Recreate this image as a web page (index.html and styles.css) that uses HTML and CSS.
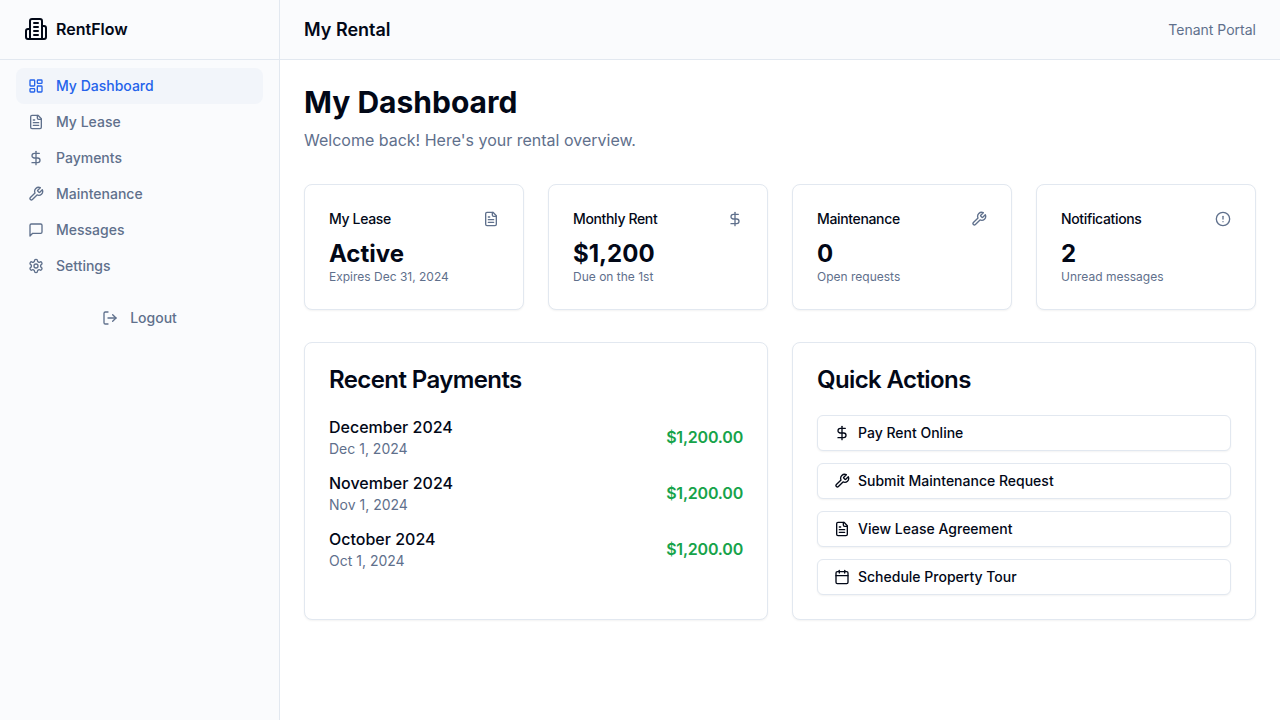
FILE: index.html
```html
<!doctype html>
<html lang="en">
<head>
	<meta charset="UTF-8">
	<title>RentFlow - My Dashboard</title>
	<link rel="stylesheet" href="styles.css">
</head>
<body>
	<svg class="sprite" xmlns="http://www.w3.org/2000/svg">
		<symbol id="i-building" viewBox="0 0 24 24"><path d="M6 22V4a2 2 0 0 1 2-2h8a2 2 0 0 1 2 2v18Z"/><path d="M6 12H4a2 2 0 0 0-2 2v6a2 2 0 0 0 2 2h2"/><path d="M18 9h2a2 2 0 0 1 2 2v9a2 2 0 0 1-2 2h-2"/><path d="M10 6h4"/><path d="M10 10h4"/><path d="M10 14h4"/><path d="M10 18h4"/></symbol>
		<symbol id="i-dashboard" viewBox="0 0 24 24"><rect width="7" height="9" x="3" y="3" rx="1"/><rect width="7" height="5" x="14" y="3" rx="1"/><rect width="7" height="9" x="14" y="12" rx="1"/><rect width="7" height="5" x="3" y="16" rx="1"/></symbol>
		<symbol id="i-file" viewBox="0 0 24 24"><path d="M15 2H6a2 2 0 0 0-2 2v16a2 2 0 0 0 2 2h12a2 2 0 0 0 2-2V7Z"/><path d="M14 2v4a2 2 0 0 0 2 2h4"/><path d="M10 9H8"/><path d="M16 13H8"/><path d="M16 17H8"/></symbol>
		<symbol id="i-dollar" viewBox="0 0 24 24"><line x1="12" x2="12" y1="2" y2="22"/><path d="M17 5H9.5a3.5 3.5 0 0 0 0 7h5a3.5 3.5 0 0 1 0 7H6"/></symbol>
		<symbol id="i-wrench" viewBox="0 0 24 24"><path d="M14.7 6.3a1 1 0 0 0 0 1.4l1.6 1.6a1 1 0 0 0 1.4 0l3.77-3.77a6 6 0 0 1-7.94 7.94l-6.91 6.91a2.12 2.12 0 0 1-3-3l6.91-6.91a6 6 0 0 1 7.94-7.94l-3.76 3.76z"/></symbol>
		<symbol id="i-message" viewBox="0 0 24 24"><path d="M21 15a2 2 0 0 1-2 2H7l-4 4V5a2 2 0 0 1 2-2h14a2 2 0 0 1 2 2z"/></symbol>
		<symbol id="i-settings" viewBox="0 0 24 24"><path d="M12.22 2h-.44a2 2 0 0 0-2 2v.18a2 2 0 0 1-1 1.73l-.43.25a2 2 0 0 1-2 0l-.15-.08a2 2 0 0 0-2.73.73l-.22.38a2 2 0 0 0 .73 2.73l.15.1a2 2 0 0 1 1 1.72v.51a2 2 0 0 1-1 1.74l-.15.09a2 2 0 0 0-.73 2.73l.22.38a2 2 0 0 0 2.73.73l.15-.08a2 2 0 0 1 2 0l.43.25a2 2 0 0 1 1 1.73V20a2 2 0 0 0 2 2h.44a2 2 0 0 0 2-2v-.18a2 2 0 0 1 1-1.73l.43-.25a2 2 0 0 1 2 0l.15.08a2 2 0 0 0 2.73-.73l.22-.39a2 2 0 0 0-.73-2.73l-.15-.08a2 2 0 0 1-1-1.74v-.5a2 2 0 0 1 1-1.74l.15-.09a2 2 0 0 0 .73-2.73l-.22-.38a2 2 0 0 0-2.73-.73l-.15.08a2 2 0 0 1-2 0l-.43-.25a2 2 0 0 1-1-1.73V4a2 2 0 0 0-2-2z"/><circle cx="12" cy="12" r="3"/></symbol>
		<symbol id="i-logout" viewBox="0 0 24 24"><path d="M9 21H5a2 2 0 0 1-2-2V5a2 2 0 0 1 2-2h4"/><polyline points="16 17 21 12 16 7"/><line x1="21" x2="9" y1="12" y2="12"/></symbol>
		<symbol id="i-alert" viewBox="0 0 24 24"><circle cx="12" cy="12" r="10"/><line x1="12" x2="12" y1="8" y2="12"/><line x1="12" x2="12.01" y1="16" y2="16"/></symbol>
		<symbol id="i-calendar" viewBox="0 0 24 24"><path d="M8 2v4"/><path d="M16 2v4"/><rect width="18" height="18" x="3" y="4" rx="2"/><path d="M3 10h18"/></symbol>
	</svg>

	<div class="app">
		<aside class="sidebar">
			<div class="brand">
				<svg class="icon icon-logo"><use href="#i-building"/></svg>
				<span class="brand-name">RentFlow</span>
			</div>
			<nav class="nav">
				<a class="nav-item active"><svg class="icon"><use href="#i-dashboard"/></svg>My Dashboard</a>
				<a class="nav-item"><svg class="icon"><use href="#i-file"/></svg>My Lease</a>
				<a class="nav-item"><svg class="icon"><use href="#i-dollar"/></svg>Payments</a>
				<a class="nav-item"><svg class="icon"><use href="#i-wrench"/></svg>Maintenance</a>
				<a class="nav-item"><svg class="icon"><use href="#i-message"/></svg>Messages</a>
				<a class="nav-item"><svg class="icon"><use href="#i-settings"/></svg>Settings</a>
				<a class="nav-item logout"><svg class="icon"><use href="#i-logout"/></svg>Logout</a>
			</nav>
		</aside>

		<div class="main">
			<header class="topbar">
				<h2 class="topbar-title">My Rental</h2>
				<span class="topbar-note">Tenant Portal</span>
			</header>

			<main class="content">
				<h1 class="page-title">My Dashboard</h1>
				<p class="page-sub">Welcome back! Here's your rental overview.</p>

				<section class="stats">
					<div class="card stat">
						<div class="stat-head"><span class="stat-label">My Lease</span><svg class="icon"><use href="#i-file"/></svg></div>
						<div class="stat-value">Active</div>
						<div class="stat-note">Expires Dec 31, 2024</div>
					</div>
					<div class="card stat">
						<div class="stat-head"><span class="stat-label">Monthly Rent</span><svg class="icon"><use href="#i-dollar"/></svg></div>
						<div class="stat-value">$1,200</div>
						<div class="stat-note">Due on the 1st</div>
					</div>
					<div class="card stat">
						<div class="stat-head"><span class="stat-label">Maintenance</span><svg class="icon"><use href="#i-wrench"/></svg></div>
						<div class="stat-value">0</div>
						<div class="stat-note">Open requests</div>
					</div>
					<div class="card stat">
						<div class="stat-head"><span class="stat-label">Notifications</span><svg class="icon"><use href="#i-alert"/></svg></div>
						<div class="stat-value">2</div>
						<div class="stat-note">Unread messages</div>
					</div>
				</section>

				<section class="panels">
					<div class="card panel">
						<h3 class="panel-title">Recent Payments</h3>
						<div class="payments">
							<div class="payment">
								<div><div class="payment-month">December 2024</div><div class="payment-date">Dec 1, 2024</div></div>
								<div class="payment-amount">$1,200.00</div>
							</div>
							<div class="payment">
								<div><div class="payment-month">November 2024</div><div class="payment-date">Nov 1, 2024</div></div>
								<div class="payment-amount">$1,200.00</div>
							</div>
							<div class="payment">
								<div><div class="payment-month">October 2024</div><div class="payment-date">Oct 1, 2024</div></div>
								<div class="payment-amount">$1,200.00</div>
							</div>
						</div>
					</div>
					<div class="card panel">
						<h3 class="panel-title">Quick Actions</h3>
						<div class="actions">
							<button class="action"><svg class="icon"><use href="#i-dollar"/></svg>Pay Rent Online</button>
							<button class="action"><svg class="icon"><use href="#i-wrench"/></svg>Submit Maintenance Request</button>
							<button class="action"><svg class="icon"><use href="#i-file"/></svg>View Lease Agreement</button>
							<button class="action"><svg class="icon"><use href="#i-calendar"/></svg>Schedule Property Tour</button>
						</div>
					</div>
				</section>
			</main>
		</div>
	</div>
</body>
</html>
```

FILE: styles.css
```css
* {
	box-sizing: border-box;
}
body {
	margin: 0;
	background: #fff;
	color: #020817;
	font-family: Inter, "Liberation Sans", sans-serif;
	font-size: 16px;
	line-height: 24px;
}
h1, h2, h3, p {
	margin: 0;
}
.sprite {
	display: none;
}
.icon {
	width: 16px;
	height: 16px;
	flex-shrink: 0;
	fill: none;
	stroke: currentColor;
	stroke-width: 2;
	stroke-linecap: round;
	stroke-linejoin: round;
}
.icon-logo {
	width: 24px;
	height: 24px;
}
.app {
	display: flex;
	min-height: 720px;
}

/* sidebar */
.sidebar {
	width: 280px;
	flex-shrink: 0;
	background: #fafbfd;
	border-right: 1px solid #e2e8f0;
}
.brand {
	height: 60px;
	display: flex;
	align-items: center;
	gap: 8px;
	padding: 0 24px 1px;
	border-bottom: 1px solid #e2e8f0;
}
.brand-name {
	font-weight: 600;
}
.nav {
	display: flex;
	flex-direction: column;
	padding: 8px 16px;
}
.nav-item {
	height: 36px;
	display: flex;
	align-items: center;
	gap: 12px;
	padding: 0 12px;
	border-radius: 8px;
	color: #5f708c;
	font-size: 14px;
	font-weight: 500;
}
.nav-item.active {
	background: #f2f5fa;
	color: #2563eb;
}
.nav-item.logout {
	justify-content: center;
	margin-top: 16px;
}

/* top bar */
.main {
	flex: 1;
	min-width: 0;
}
.topbar {
	height: 60px;
	display: flex;
	align-items: center;
	justify-content: space-between;
	padding: 0 24px;
	background: #fafbfd;
	border-bottom: 1px solid #e2e8f0;
}
.topbar-title {
	font-size: 18px;
	font-weight: 600;
}
.topbar-note {
	color: #5f708c;
	font-size: 14px;
}

/* content */
.content {
	padding: 24px;
}
.page-title {
	font-size: 30px;
	line-height: 36px;
	font-weight: 700;
}
.page-sub {
	margin-top: 8px;
	color: #5f708c;
}
.card {
	background: #fff;
	border: 1px solid #e2e8f0;
	border-radius: 8px;
	box-shadow: 0 1px 2px rgba(0, 0, 0, 0.05);
}
.stats {
	display: grid;
	grid-template-columns: repeat(4, 1fr);
	gap: 24px;
	margin-top: 32px;
}
.stat {
	padding: 24px;
}
.stat-head {
	display: flex;
	align-items: center;
	justify-content: space-between;
	padding-bottom: 8px;
	color: #5f708c;
}
.stat-label {
	color: #020817;
	font-size: 14px;
	line-height: 20px;
	font-weight: 500;
	letter-spacing: -0.35px;
}
.stat-value {
	margin-bottom: -2px;
	font-size: 24px;
	line-height: 34px;
	font-weight: 700;
}
.stat-note {
	color: #5f708c;
	font-size: 12px;
	line-height: 16px;
}
.panels {
	display: grid;
	grid-template-columns: 1fr 1fr;
	gap: 24px;
	margin-top: 32px;
}
.panel {
	padding: 24px;
}
.panel-title {
	margin-bottom: -2px;
	font-size: 24px;
	line-height: 26px;
	font-weight: 600;
	letter-spacing: -0.6px;
}
.payments {
	display: flex;
	flex-direction: column;
	gap: 12px;
	margin-top: 24px;
}
.payment {
	display: flex;
	align-items: center;
	justify-content: space-between;
}
.payment-month {
	font-weight: 500;
}
.payment-date {
	color: #5f708c;
	font-size: 14px;
	line-height: 20px;
}
.payment-amount {
	color: #16a34a;
	font-weight: 600;
	letter-spacing: -0.2px;
}
.actions {
	display: flex;
	flex-direction: column;
	gap: 12px;
	margin-top: 24px;
}
.action {
	height: 36px;
	display: flex;
	align-items: center;
	gap: 8px;
	padding: 0 16px;
	background: #fff;
	border: 1px solid #e2e8f0;
	border-radius: 6px;
	box-shadow: 0 1px 2px rgba(0, 0, 0, 0.05);
	color: #020817;
	font-family: inherit;
	font-size: 14px;
	line-height: 20px;
	font-weight: 500;
	text-align: left;
}
```
